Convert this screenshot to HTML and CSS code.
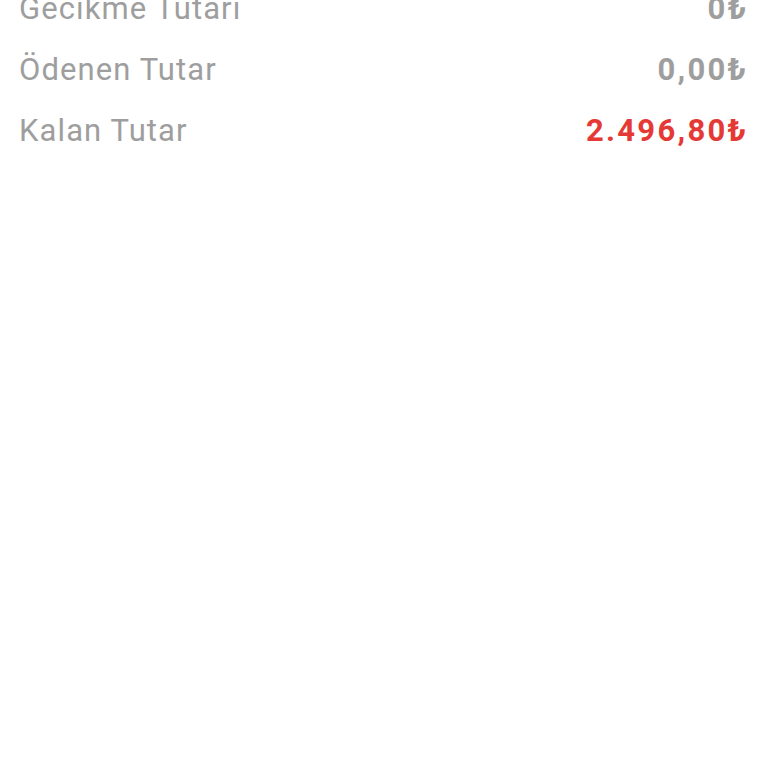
FILE: index.html
```html
<!DOCTYPE html>
<html lang="tr">
<head>
<meta charset="utf-8">
<link rel="stylesheet" href="styles.css">
</head>
<body>
<div class="summary">
  <div class="row"><span class="label">Gecikme Tutarı</span><span class="value">0₺</span></div>
  <div class="row"><span class="label">Ödenen Tutar</span><span class="value">0,00₺</span></div>
  <div class="row"><span class="label">Kalan Tutar</span><span class="value red">2.496,80₺</span></div>
</div>
</body>
</html>
```
FILE: styles.css
```css
html, body {
  margin: 0;
  padding: 0;
  background: #ffffff;
}
body {
  font-family: Roboto, "Noto Sans", sans-serif;
}
.summary {
  display: flex;
  flex-direction: column;
  padding: 0 22px 0 19px;
  margin-top: -22px;
}
.row {
  display: flex;
  justify-content: space-between;
  align-items: baseline;
  height: 61px;
  line-height: 61px;
}
.label {
  color: #9e9e9e;
  font-size: 31px;
  letter-spacing: 1.1px;
}
.value {
  color: #9e9e9e;
  font-weight: 700;
  font-size: 31px;
  letter-spacing: 2.3px;
  margin-right: -2.3px;
}
.value.red {
  color: #e53935;
}
```
